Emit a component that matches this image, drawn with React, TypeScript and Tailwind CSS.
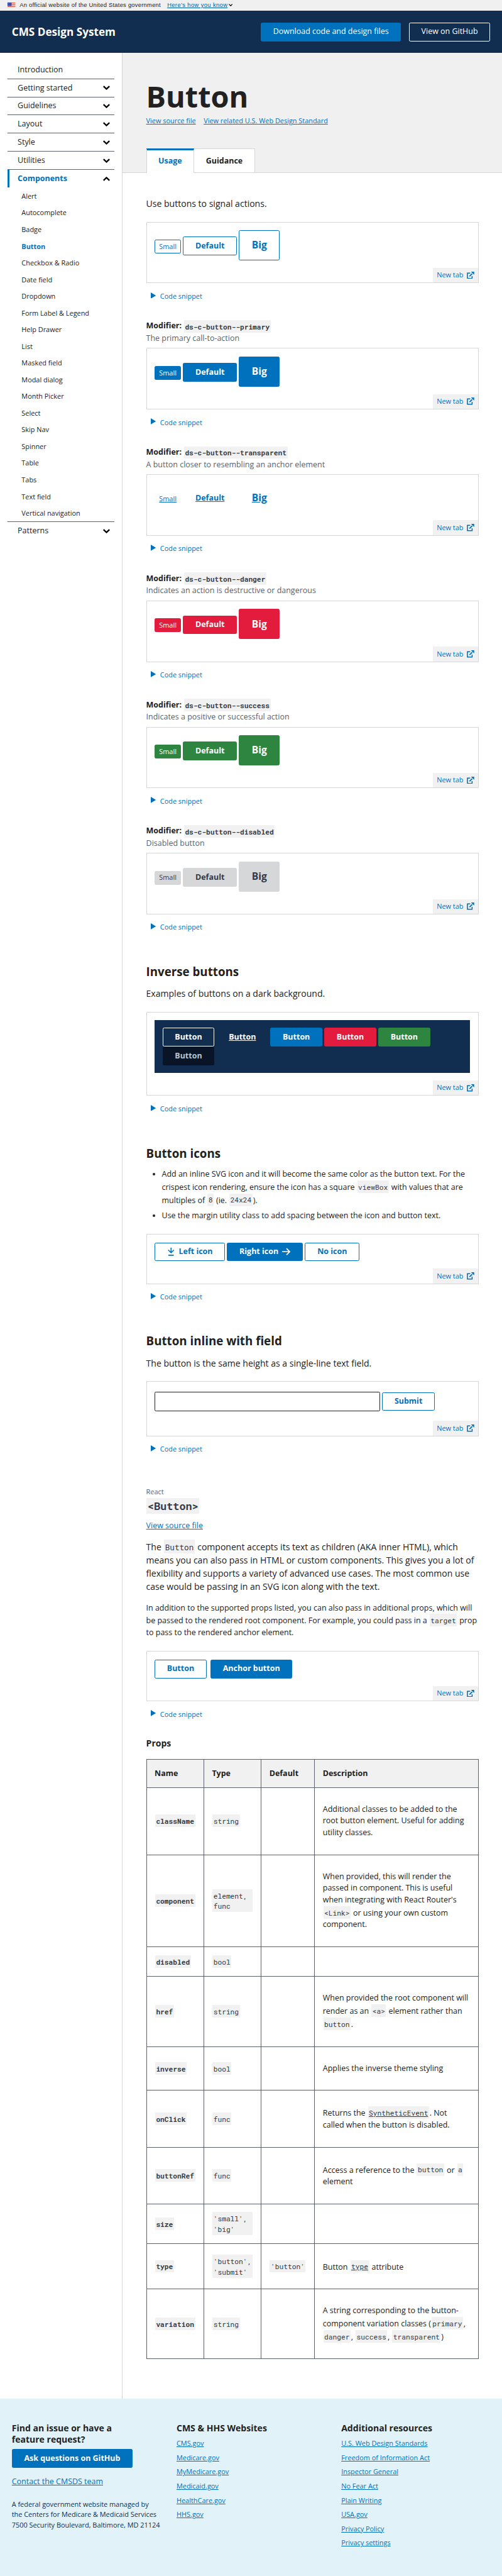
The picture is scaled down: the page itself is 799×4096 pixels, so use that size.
import type { ReactNode } from 'react';

const navTop = ['Getting started', 'Guidelines', 'Layout', 'Style', 'Utilities'];
const navComponents = [
  'Alert', 'Autocomplete', 'Badge', 'Button', 'Checkbox & Radio', 'Date field', 'Dropdown',
  'Form Label & Legend', 'Help Drawer', 'List', 'Masked field', 'Modal dialog', 'Month Picker',
  'Select', 'Skip Nav', 'Spinner', 'Table', 'Tabs', 'Text field', 'Vertical navigation',
];

function Chevron({ up = false, className = 'w-[14px]' }: { up?: boolean; className?: string }) {
  return (
    <svg viewBox="0 0 14 9" className={className} fill="none" stroke="#000" strokeWidth="3">
      <path d={up ? 'M1 7.6 7 1.9l6 5.7' : 'M1 1.4l6 5.7 6-5.7'} />
    </svg>
  );
}

function Flag() {
  return (
    <svg viewBox="0 0 16 11" className="h-[11px] w-[16px]">
      <rect width="16" height="11" fill="#fff" />
      {[0, 2, 4, 6, 8, 10].map((y) => (
        <rect key={y} y={y} width="16" height="1" fill="#db3e1f" />
      ))}
      <rect width="8" height="7" fill="#1e33b1" />
      {[1, 3, 5].map((y) =>
        [1, 3, 5].map((x) => <rect key={`${x}-${y}`} x={x + 0.2} y={y} width="0.8" height="0.8" fill="#fff" />),
      )}
    </svg>
  );
}

function Code({ children, className = 'text-[14.4px]' }: { children: ReactNode; className?: string }) {
  return (
    <code
      className={`mx-px inline-block bg-[#f1f1f1] px-[2px] pt-[3.7px] pb-[0.3px] font-['Roboto_Mono','Liberation_Mono',monospace] leading-[1.5] text-[#323a45] ${className}`}
    >
      {children}
    </code>
  );
}

const base = 'flex shrink-0 items-center justify-center rounded-[3px] border whitespace-nowrap ';
const solid = {
  plain: 'border-[#0071bc] bg-white text-[#0071bc]',
  primary: 'border-[#0071bc] bg-[#0071bc] text-white',
  transparent: 'border-transparent text-[#0071bc] underline',
  danger: 'border-[#e31c3d] bg-[#e31c3d] text-white',
  success: 'border-[#2e8540] bg-[#2e8540] text-white',
  disabled: 'border-[#d6d7d9] bg-[#d6d7d9] text-[#323a45]',
  inverse: 'border-white text-white',
  inverseTransparent: 'border-transparent text-white underline',
  inverseDisabled: 'border-[#091526] bg-[#091526] text-[#bac5cf]',
};
type Tone = keyof typeof solid;

function Btn({ tone, children, className = '' }: { tone: Tone; children: ReactNode; className?: string }) {
  return (
    <button className={`${base} h-[38px] px-[24px] text-[16px] font-bold ${solid[tone]} ${className}`}>{children}</button>
  );
}

function Sizes({ tone }: { tone: Tone }) {
  return (
    <div className="flex items-start gap-[4px]">
      <button className={`${base} mt-[19px] h-[28px] px-[8px] text-[14px] ${solid[tone]}`}>Small</button>
      <Btn tone={tone} className="mt-[13px]">Default</Btn>
      <button className={`${base} h-[61px] px-[25px] text-[20px] font-bold ${solid[tone]}`}>Big</button>
    </div>
  );
}

function Example({ height, children }: { height: string; children: ReactNode }) {
  return (
    <>
      <div className={`flex flex-col justify-between border border-[#d6d7d9] ${height}`}>
        <div className="px-[16px] pt-[16px]">{children}</div>
        <a className="flex h-[30px] w-[92px] items-center justify-between self-end bg-[#f1f1f1] px-[8px] text-[14px] text-[#0071bc]">
          New tab
          <svg viewBox="0 0 15 15" className="w-[15px]">
            <path d="M7 3H1.2v10.8h9.6V9" fill="none" stroke="#0071bc" strokeWidth="2" />
            <path d="M5.5 9.5 11 4" stroke="#0071bc" strokeWidth="2.4" />
            <path d="M8.6 0H15v6.4z" fill="#0071bc" />
          </svg>
        </a>
      </div>
      <div className="flex h-[36px] items-center pt-[16px] pl-[10px] text-[14px] leading-[20px] text-[#0071bc]">
        <svg viewBox="0 0 10 12" className="mr-[8px] mb-[3px] w-[10.5px]">
          <path d="M0 0v12l10-6z" fill="#0071bc" />
        </svg>
        Code snippet
      </div>
    </>
  );
}

function Modifier({ name, text, tone }: { name: string; text: string; tone: Tone }) {
  return (
    <section>
      <div className="flex h-[96.2px] flex-col justify-end pb-[7.5px]">
        <h3 className="flex h-[26px] items-center gap-[4px] text-[16px] font-bold">
          Modifier:
          <Code>{name}</Code>
        </h3>
        <p className="text-[16px] leading-[24px] text-[#5b616b]">{text}</p>
      </div>
      <Example height="h-[125px]">
        <Sizes tone={tone} />
      </Example>
    </section>
  );
}

function SectionHead({ title, lead }: { title: string; lead: string }) {
  return (
    <div className="h-[162px] pt-[65px]">
      <h2 className="text-[24px] leading-[31px] font-bold">{title}</h2>
      <p className="mt-[15.5px] text-[18px] leading-[27px]">{lead}</p>
    </div>
  );
}

const L = (t: string) => <Code><span className="underline">{t}</span></Code>;

const rows: { name: string; type: ReactNode; def?: string; desc?: ReactNode; h: string }[] = [
  { name: 'className', type: 'string', h: 'h-[137px]', desc: 'Additional classes to be added to the root button element. Useful for adding utility classes.' },
  { name: 'component', type: 'element, func', h: 'h-[188px]', desc: <>When provided, this will render the passed in component. This is useful when integrating with React Router's <Code>{'<Link>'}</Code> or using your own custom component.</> },
  { name: 'disabled', type: 'bool', h: 'h-[60px]' },
  { name: 'href', type: 'string', h: 'h-[143px]', desc: <>When provided the root component will render as an <Code>{'<a>'}</Code> element rather than <Code>button</Code>.</> },
  { name: 'inverse', type: 'bool', h: 'h-[89px]', desc: 'Applies the inverse theme styling' },
  { name: 'onClick', type: 'func', h: 'h-[116px]', desc: <>Returns the {L('SyntheticEvent')}. Not called when the button is disabled.</> },
  { name: 'buttonRef', type: 'func', h: 'h-[115.5px]', desc: <>Access a reference to the <Code>button</Code> or <Code>a</Code> element</> },
  { name: 'size', type: "'small', 'big'", h: 'h-[81.5px]' },
  { name: 'type', type: "'button', 'submit'", def: "'button'", h: 'h-[92px]', desc: <>Button {L('type')} attribute</> },
  { name: 'variation', type: 'string', h: 'h-[142.5px]', desc: <>A string corresponding to the button-component variation classes (<Code>primary</Code>, <Code>danger</Code>, <Code>success</Code>, <Code>transparent</Code>)</> },
];

function FooterLinks({ title, links }: { title: string; links: string[] }) {
  return (
    <div className="w-[336px] shrink-0">
      <h2 className="text-[18px] leading-[23.4px] font-bold">{title}</h2>
      <ul className="mt-[5px] text-[14px] text-[#0071bc]">
        {links.map((l) => (
          <li key={l} className="flex h-[29px] items-center">
            <a className="underline">{l}</a>
          </li>
        ))}
      </ul>
    </div>
  );
}

export default function App() {
  return (
    <div className="w-full overflow-hidden bg-white font-['Open_Sans',sans-serif] text-[16px] text-[#212121] [zoom:0.7805]">
      <div className="flex h-[22px] items-center bg-[#f0f0f0] px-[16px] pb-[2px] font-['Liberation_Sans',sans-serif] text-[12px]">
        <Flag />
        <span className="ml-[8px] w-[301px] tracking-[0.33px] whitespace-nowrap">An official website of the United States government</span>
        <a className="tracking-[0.5px] whitespace-nowrap text-[#005ea2] underline">Here’s how you know</a>
        <Chevron className="ml-[2px] w-[8px]" />
      </div>

      <header className="flex h-[86px] items-center bg-[#112e51] px-[24px]">
        <h1 className="flex-1 text-[22px] font-bold text-white">CMS Design System</h1>
        <Btn tone="primary" className="font-normal!">Download code and design files</Btn>
        <Btn tone="inverse" className="ml-[16px] font-normal!">View on GitHub</Btn>
      </header>

      <div className="flex h-[4779px]">
        <nav className="w-[250px] shrink-0 border-r border-[#d6d7d9] px-[16px] pt-[16px]">
          <a className="flex h-[37px] items-center border-b border-[#5b616b] pt-px pl-[20px]">Introduction</a>
          {navTop.map((n) => (
            <a key={n} className="flex h-[37px] items-center justify-between border-b border-[#5b616b] pt-px pr-[8px] pl-[20px]">
              {n}
              <Chevron />
            </a>
          ))}
          <a className="flex h-[36px] items-center justify-between border-l-4 border-[#0071bc] pt-px pr-[8px] pl-[16px] font-bold text-[#0071bc]">
            Components
            <Chevron up />
          </a>
          <ul className="pt-px text-[14px]">
            {navComponents.map((n) => (
              <li key={n} className={`flex h-[34px] items-center pl-[28px] ${n === 'Button' ? 'font-bold text-[#0071bc]' : ''}`}>{n}</li>
            ))}
          </ul>
          <a className="flex h-[37px] items-center justify-between border-t border-[#5b616b] pr-[8px] pl-[20px]">
            Patterns
            <Chevron />
          </a>
        </nav>

        <main className="flex-1">
          <div className="flex h-[245px] flex-col border-b border-[#d6d7d9] bg-[#f0f0f0] px-[48px] pt-[49px]">
            <h1 className="text-[60px] leading-[78px] font-bold">Button</h1>
            <div className="mt-px flex gap-[16px] text-[14px] leading-[21px] text-[#0071bc]">
              <a className="underline">View source file</a>
              <a className="underline">View related U.S. Web Design Standard</a>
            </div>
            <div className="mt-auto -mb-px flex h-[50px] font-bold">
              <a className="flex w-[98px] items-center justify-center border-x border-t-4 border-x-[#d6d7d9] border-t-[#0071bc] bg-white pb-[2px] text-[#0071bc]">Usage</a>
              <a className="flex w-[124px] items-center justify-center border-y border-r border-[#d6d7d9] bg-white pt-[2px]">Guidance</a>
            </div>
          </div>

          <div className="px-[48px]">
            <p className="h-[99px] pt-[48.5px] text-[18px] leading-[27px]">Use buttons to signal actions.</p>
            <Example height="h-[125px]">
              <Sizes tone="plain" />
            </Example>
            <Modifier name="ds-c-button--primary" text="The primary call-to-action" tone="primary" />
            <Modifier name="ds-c-button--transparent" text="A button closer to resembling an anchor element" tone="transparent" />
            <Modifier name="ds-c-button--danger" text="Indicates an action is destructive or dangerous" tone="danger" />
            <Modifier name="ds-c-button--success" text="Indicates a positive or successful action" tone="success" />
            <Modifier name="ds-c-button--disabled" text="Disabled button" tone="disabled" />

            <SectionHead title="Inverse buttons" lead="Examples of buttons on a dark background." />
            <Example height="h-[171.5px]">
              <div className="flex h-[108px] flex-wrap content-start gap-x-[4px] bg-[#112e51] p-[16px]">
                <Btn tone="inverse">Button</Btn>
                <Btn tone="inverseTransparent">Button</Btn>
                <Btn tone="primary">Button</Btn>
                <Btn tone="danger">Button</Btn>
                <Btn tone="success">Button</Btn>
                <Btn tone="inverseDisabled">Button</Btn>
              </div>
            </Example>

            <div className="h-[245.5px] pt-[66px]">
              <h2 className="text-[24px] leading-[31px] font-bold">Button icons</h2>
              <ul className="mt-[15.5px] list-disc pl-[32px] leading-[24px]">
                <li>
                  Add an inline SVG icon and it will become the same color as the button text. For the crispest icon rendering,
                  ensure the icon has a square <Code>viewBox</Code> with values that are multiples of <Code>8</Code> (ie.{' '}
                  <Code>24x24</Code>).
                </li>
                <li className="mt-[8px]">Use the margin utility class to add spacing between the icon and button text.</li>
              </ul>
            </div>
            <Example height="h-[102px]">
              <div className="flex gap-[4px]">
                <Btn tone="plain">
                  <svg viewBox="0 0 16 18" className="mr-[8px] w-[16px]" fill="none" stroke="currentColor" strokeWidth="2">
                    <path d="M8 1v10M2.2 5.8 8 11.4l5.8-5.6M2.5 16.5h11" />
                  </svg>
                  Left icon
                </Btn>
                <Btn tone="primary">
                  Right icon
                  <svg viewBox="0 0 17 16" className="ml-[8px] w-[17px]" fill="none" stroke="currentColor" strokeWidth="2.2">
                    <path d="M0 8h15M9 1.5 15.4 8 9 14.500" />
                  </svg>
                </Btn>
                <Btn tone="plain">No icon</Btn>
              </div>
            </Example>

            <SectionHead title="Button inline with field" lead="The button is the same height as a single-line text field." />
            <Example height="h-[112px]">
              <div className="flex items-center gap-[4px] pt-[4px]">
                <input className="h-[40px] w-[460px] rounded-[3px] border-2 border-[#212121] bg-white" />
                <Btn tone="plain">Submit</Btn>
              </div>
            </Example>

            <div className="h-[402px] pt-[66.5px]">
              <div className="text-[14px] leading-[21px] text-[#5b616b]">React</div>
              <h2 className="flex h-[36px] items-center font-bold">
                <Code className="text-[21.6px] leading-[28px]!">{'<Button>'}</Code>
              </h2>
              <a className="mt-[11px] block leading-[24px] text-[#0071bc] underline">View source file</a>
              <p className="mt-[16px] text-[18px] leading-[27px]">
                The <Code className="text-[16.2px]">Button</Code> component accepts its text as children (AKA inner HTML), which means you can also
                pass in HTML or custom components. This gives you a lot of flexibility and supports a variety of advanced use
                cases. The most common use case would be passing in an SVG icon along with the text.
              </p>
              <p className="mt-[18.5px] leading-[24px]">
                In addition to the supported props listed, you can also pass in additional props, which will be passed to the
                rendered root component. For example, you could pass in a <Code>target</Code> prop to pass to the rendered
                anchor element.
              </p>
            </div>
            <Example height="h-[102px]">
              <div className="flex gap-[8px]">
                <Btn tone="plain">Button</Btn>
                <Btn tone="primary">Anchor button</Btn>
              </div>
            </Example>

            <h3 className="h-[82px] pt-[38px] text-[18px] leading-[23px] font-bold">Props</h3>
            <table className="w-[678px] table-fixed border-collapse text-left [&_td]:border [&_td]:border-[#5b616b] [&_td]:px-[16px] [&_td]:leading-[24px] [&_th]:border [&_th]:border-[#5b616b] [&_th]:px-[16px]">
              <thead>
                <tr className="h-[57px] bg-[#f1f1f1]">
                  <th className="w-[117px]">Name</th>
                  <th className="w-[117px]">Type</th>
                  <th className="w-[109px]">Default</th>
                  <th>Description</th>
                </tr>
              </thead>
              <tbody>
                {rows.map((r) => (
                  <tr key={r.name} className={r.h}>
                    <td className="font-bold"><Code>{r.name}</Code></td>
                    <td><Code>{r.type}</Code></td>
                    <td>{r.def && <Code>{r.def}</Code>}</td>
                    <td>{r.desc}</td>
                  </tr>
                ))}
              </tbody>
            </table>
          </div>
        </main>
      </div>

      <footer className="flex h-[361px] bg-[#e1f3f8] px-[24px] pt-[48px]">
        <div className="w-[336px] shrink-0">
          <h2 className="w-[240px] text-[18px] leading-[23.4px] font-bold">Find an issue or have a feature request?</h2>
          <Btn tone="primary" className="mt-[8px]">Ask questions on GitHub</Btn>
          <a className="mt-[16px] block leading-[24px] text-[#0071bc] underline">Contact the CMSDS team</a>
          <p className="mt-[24px] text-[14px] leading-[21px] whitespace-nowrap text-[#112e51]">
            A federal government website managed by
            <br />
            the Centers for Medicare &amp; Medicaid Services
            <br />
            7500 Security Boulevard, Baltimore, MD 21124
          </p>
        </div>
        <FooterLinks title="CMS & HHS Websites" links={['CMS.gov', 'Medicare.gov', 'MyMedicare.gov', 'Medicaid.gov', 'HealthCare.gov', 'HHS.gov']} />
        <FooterLinks
          title="Additional resources"
          links={['U.S. Web Design Standards', 'Freedom of Information Act', 'Inspector General', 'No Fear Act', 'Plain Writing', 'USA.gov', 'Privacy Policy', 'Privacy settings']}
        />
      </footer>
    </div>
  );
}
